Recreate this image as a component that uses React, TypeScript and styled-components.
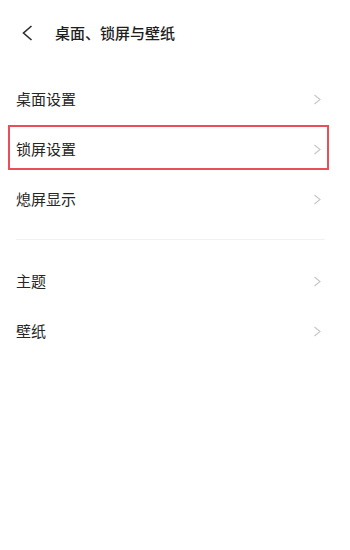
import React from 'react';
import styled, { createGlobalStyle } from 'styled-components';

const GlobalStyle = createGlobalStyle`
    html, body {
        margin: 0;
        padding: 0;
        background: #ffffff;
    }
    body {
        font-family: "Noto Sans CJK SC", "Noto Sans", sans-serif;
    }
`;

const Page = styled.div`
    width: 350px;
    height: 550px;
    background: #ffffff;
    overflow: hidden;
`;

const Header = styled.div`
    height: 66px;
    display: flex;
    align-items: center;
    padding-left: 21px;
`;

const BackButton = styled.div`
    width: 14px;
    height: 16px;
    display: flex;
    align-items: center;
    margin-right: 20px;
`;

const Title = styled.span`
    font-size: 15px;
    font-weight: 500;
    color: #1e1e1e;
    line-height: 20px;
`;

const List = styled.div`
    padding-top: 8px;
    display: flex;
    flex-direction: column;
`;

const Row = styled.div<{ $highlighted?: boolean }>`
    position: relative;
    height: 50px;
    display: flex;
    align-items: center;
    justify-content: space-between;
    padding: 0 28px 0 16px;

    ${(p) =>
        p.$highlighted &&
        `
        &::after {
            content: '';
            position: absolute;
            top: 1px;
            bottom: 4px;
            left: 8px;
            right: 21px;
            border: 2px solid #ec4e57;
            pointer-events: none;
        }
    `}
`;

const Label = styled.span`
    font-size: 15px;
    color: #262626;
    line-height: 20px;
`;

const Divider = styled.div`
    height: 1px;
    background: #f1f1f1;
    margin: 15px 25px 16px 16px;
`;

const Chevron = () => (
    <svg width="9" height="11" viewBox="0 0 9 11">
        <path d="M1.5 1 L7 5.5 L1.5 10" fill="none" stroke="#c6c6c6" strokeWidth="1.1" />
    </svg>
);

const BackIcon = () => (
    <svg width="13" height="16" viewBox="0 0 13 16">
        <path d="M10.5 1 L2.5 8 L10.5 15" fill="none" stroke="#2b2b2b" strokeWidth="1.6" />
    </svg>
);

const topItems = [
    { label: '桌面设置' },
    { label: '锁屏设置', highlighted: true },
    { label: '熄屏显示' },
];

const bottomItems = [{ label: '主题' }, { label: '壁纸' }];

export default function App() {
    return (
        <Page>
            <GlobalStyle />
            <Header>
                <BackButton>
                    <BackIcon />
                </BackButton>
                <Title>桌面、锁屏与壁纸</Title>
            </Header>
            <List>
                {topItems.map((item) => (
                    <Row key={item.label} $highlighted={item.highlighted}>
                        <Label>{item.label}</Label>
                        <Chevron />
                    </Row>
                ))}
                <Divider />
                {bottomItems.map((item) => (
                    <Row key={item.label}>
                        <Label>{item.label}</Label>
                        <Chevron />
                    </Row>
                ))}
            </List>
        </Page>
    );
}
